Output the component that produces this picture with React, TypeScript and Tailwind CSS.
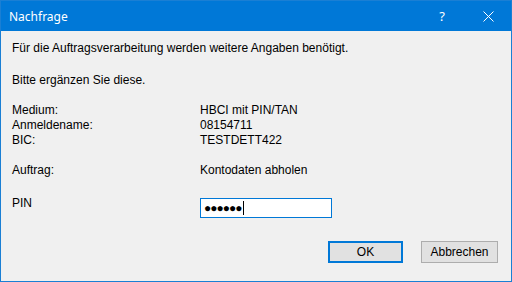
export default function App() {
  const font = { fontFamily: '"Liberation Sans", Arial, sans-serif' }
  return (
    <div className="w-[512px] h-[282px] flex flex-col border border-[#1a7fd4] bg-[#f0f0f0] text-[12px] leading-[15px] text-black" style={font}>
      <div className="h-[30px] shrink-0 bg-[#0078d7] flex items-center text-white">
        <span className="pl-[8px] text-[12px] font-['Noto_Sans',sans-serif]">Nachfrage</span>
        <span className="ml-auto w-[46px] text-center text-[13px] font-['Noto_Sans',sans-serif]">?</span>
        <span className="w-[46px] flex justify-center">
          <svg width="11" height="11" viewBox="0 0 11 11">
            <path d="M0.5 0.5 L10.5 10.5 M10.5 0.5 L0.5 10.5" stroke="white" strokeWidth="1" />
          </svg>
        </span>
      </div>

      <div className="flex-1 flex flex-col px-[11px] pt-[10px]">
        <p>Für die Auftragsverarbeitung werden weitere Angaben benötigt.</p>
        <p className="mt-[17px]">Bitte ergänzen Sie diese.</p>

        <div className="mt-[15px] grid grid-cols-[188px_1fr]">
          <span>Medium:</span>
          <span>HBCI mit PIN/TAN</span>
          <span>Anmeldename:</span>
          <span>08154711</span>
          <span>BIC:</span>
          <span>TESTDETT422</span>
        </div>

        <div className="mt-[15px] grid grid-cols-[188px_1fr]">
          <span>Auftrag:</span>
          <span>Kontodaten abholen</span>
        </div>

        <div className="mt-[18px] grid grid-cols-[188px_1fr] items-start">
          <span>PIN</span>
          <div className="mt-[2px] w-[132px] h-[20px] border border-[#0078d7] bg-white flex items-center pl-[3px]">
            <span className="text-[12px] tracking-[-1px] font-bold leading-none">●●●●●●</span>
            <span className="ml-[1px] w-[1px] h-[14px] bg-black" />
          </div>
        </div>

        <div className="mt-auto mb-[18px] flex justify-end gap-[18px] pr-[2px]">
          <button className="w-[75px] h-[22px] border-2 border-[#0078d7] bg-[#e1e1e1]">OK</button>
          <button className="w-[77px] h-[22px] border border-[#adadad] bg-[#e1e1e1]">Abbrechen</button>
        </div>
      </div>
    </div>
  )
}
